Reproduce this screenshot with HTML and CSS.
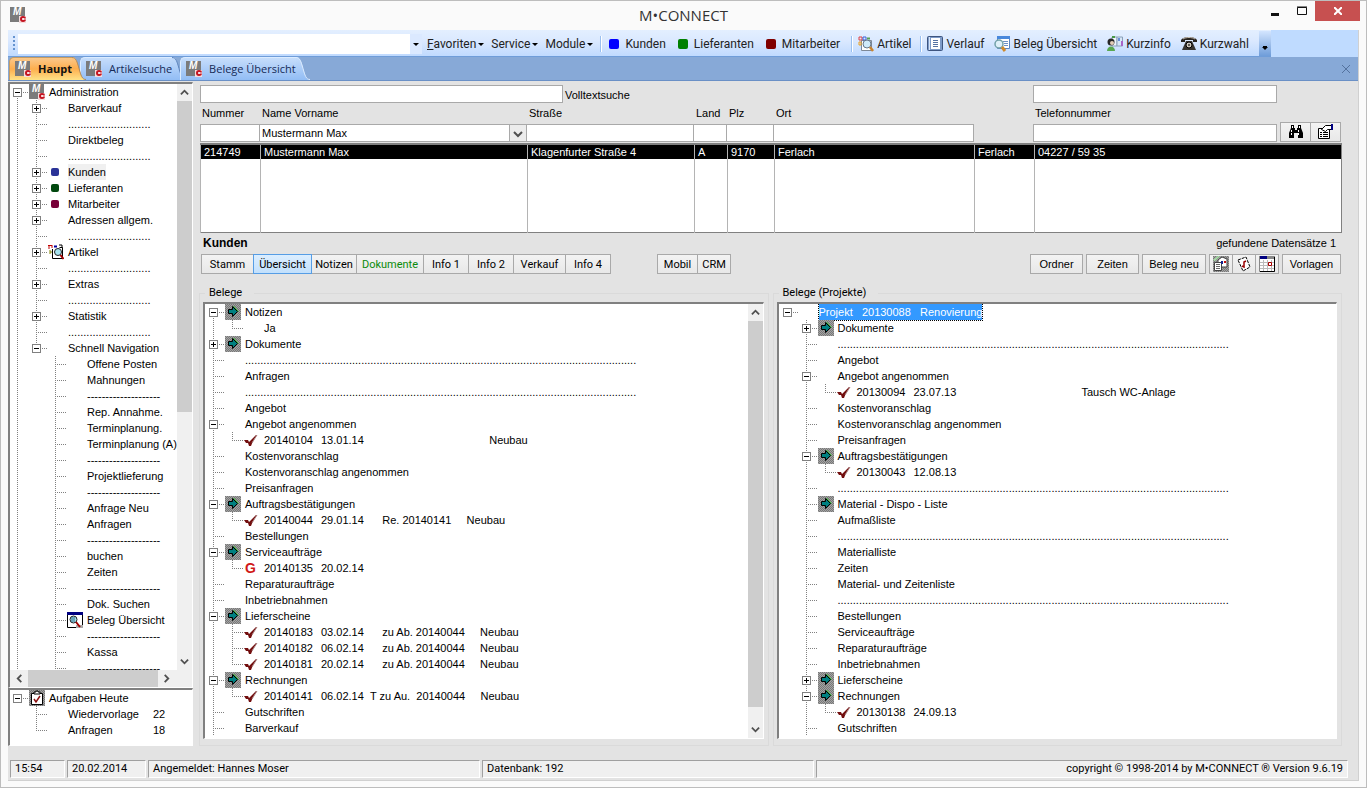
FILE: index.html
```html
<!DOCTYPE html>
<html lang="de">
<head>
    <meta charset="utf-8">
    <title>M•CONNECT</title>
    <link rel="stylesheet" href="styles.css">
</head>
<body>

    <!-- Shared icons -->
    <svg class="defs" width="0" height="0">
        <defs>
            <pattern id="checker" width="2" height="2" patternUnits="userSpaceOnUse">
                <rect width="2" height="2" fill="#a4a4a4"/>
                <rect width="1" height="1" fill="#787878"/>
                <rect x="1" y="1" width="1" height="1" fill="#787878"/>
            </pattern>
            <linearGradient id="tab-blue" x1="0" y1="0" x2="0" y2="1">
                <stop offset="0" stop-color="#c6ddfb"/>
                <stop offset="1" stop-color="#92bdf5"/>
            </linearGradient>
            <linearGradient id="tab-orange" x1="0" y1="0" x2="0" y2="1">
                <stop offset="0" stop-color="#fbc98c"/>
                <stop offset="0.5" stop-color="#fdae4e"/>
                <stop offset="1" stop-color="#fee287"/>
            </linearGradient>
        </defs>
        <symbol id="logo" viewBox="0 0 16 16">
            <rect width="15" height="15" fill="#7b7b7b"/>
            <text x="3" y="8" font-family="Liberation Sans" font-size="10" font-weight="bold" font-style="italic" fill="#fff">M</text>
            <path d="M9 9h7v7H9z" fill="#f4dcdc"/>
            <circle cx="13" cy="12" r="2" fill="#fff" stroke="#c41420" stroke-width="2"/>
            <path d="M13 12h3" stroke="#fff"/>
        </symbol>
        <symbol id="arrow" viewBox="0 0 16 16">
            <rect width="16" height="16" fill="url(#checker)"/>
            <path d="M3.500 5.500h4v-3l5 5-5 5v-3h-4z" fill="#008080" stroke="#000"/>
            <path d="M8.500 2l5 5.500" stroke="#2fbf2f" fill="none"/>
        </symbol>
        <symbol id="check" viewBox="0 0 16 16">
            <path d="M0 8h4l1 2 7-7h1L9 9l-2 5H5l-1-3H2z" fill="#720e0e"/>
            <path d="M8 11l5-8" stroke="#a98080" fill="none"/>
        </symbol>
        <symbol id="glass" viewBox="0 0 16 16">
            <path d="M1 1v4M0 1.500h4M4 1v3" fill="none" stroke="#c00000"/>
            <path d="M4.500 5v9.500h10V3.500h-3" fill="#fff" stroke="#000"/>
            <path d="M2 6v4M2 8h2" stroke="#808000"/>
            <path d="M6 2.500h3" stroke="#0000a0" stroke-width="2"/>
            <path d="M11 1h3v3" stroke="#000" fill="none"/>
            <circle cx="10" cy="8" r="3.500" fill="#a8e4f0" stroke="#222"/>
            <path d="M12.500 11l3 4" stroke="#a00000" stroke-width="2"/>
        </symbol>
        <symbol id="glass-soft" viewBox="0 0 16 16">
            <path d="M3.500 4.500h10v10h-10z" fill="#fff" stroke="#7d8896"/>
            <path d="M1 1h3v3H1z" fill="none" stroke="#e04040"/>
            <path d="M5 1h3v3H5z" fill="none" stroke="#3a62d8"/>
            <path d="M1 6h2v3H1z" fill="none" stroke="#e8a020"/>
            <path d="M9 2.500h3" stroke="#58a058" stroke-width="2"/>
            <circle cx="9" cy="8" r="4" fill="#cfeafa" stroke="#68788c"/>
            <path d="M12 11l3 4" stroke="#c88430" stroke-width="2.500"/>
        </symbol>
        <symbol id="beleg" viewBox="0 0 16 16">
            <path d="M.5.5h15v15H.5z" fill="#fff" stroke="#000"/>
            <path d="M0 0h16v3H0z" fill="#000080"/>
            <path d="M9 13h7v3H9z" fill="#aaa"/>
            <circle cx="6.500" cy="7.500" r="3.500" fill="#a8e0e8" stroke="#222"/>
            <path d="M9 10l4 5" stroke="#a00000" stroke-width="2"/>
            <path d="M5 5v5M7 5v5" stroke="#2b6a8a"/>
        </symbol>
        <symbol id="beleg-soft" viewBox="0 0 16 16">
            <path d="M3.500.5h12v12h-12z" fill="#fff" stroke="#5b85c0"/>
            <path d="M3 0h13v3H3z" fill="#4888dc"/>
            <path d="M9 5.500h5M10 7.500h4M10 9.500h4" stroke="#6d90c4"/>
            <circle cx="5" cy="8" r="4" fill="#dff0f8" stroke="#72a0a8" stroke-width="1.500"/>
            <path d="M8 11l3 4" stroke="#cf8a2c" stroke-width="3"/>
        </symbol>
        <symbol id="verlauf" viewBox="0 0 16 16">
            <rect x=".5" y=".5" width="15" height="14" rx="1" fill="#7d9ac8" stroke="#3d5580"/>
            <path d="M4 2h9v11H4z" fill="#fff"/>
            <path d="M6 4.500h5M6 6.500h5M6 8.500h5M6 10.500h5" stroke="#5673a4"/>
            <path d="M2.500 1v13" stroke="#d7e5f8"/>
        </symbol>
        <symbol id="kurzinfo" viewBox="0 0 16 16">
            <path d="M5 1h5v9H5z" fill="#eef4fb" stroke="#8aa0b8"/>
            <path d="M10 1h5.500v9H10z" fill="#d6e6f8" stroke="#8aa0b8"/>
            <path d="M5 0h3v2H5z" fill="#4a9a48"/>
            <path d="M11 2h2v3h-2z" fill="#6a90d8"/>
            <path d="M14 5h2v5h-2z" fill="#a864c8"/>
            <circle cx="4" cy="6" r="3.500" fill="#282828"/>
            <circle cx="5" cy="7" r="2" fill="#e3cdb8"/>
            <path d="M0 15c0-6 8-6 8 0z" fill="#58a850"/>
        </symbol>
        <symbol id="phone" viewBox="0 0 16 16">
            <path d="M0 6V4c2-4 14-4 16 0v2h-4V4H4v2z" fill="#282420"/>
            <path d="M5 5h6l4 9H1z" fill="#383430"/>
            <circle cx="8" cy="9" r="3" fill="#cfc6ba" stroke="#000"/>
            <circle cx="8" cy="9" r="1" fill="#333"/>
            <path d="M2 3c3-2 9-2 12 0" stroke="#c8beb0" fill="none"/>
        </symbol>
        <symbol id="clipboard" viewBox="0 0 16 16">
            <rect width="16" height="16" fill="url(#checker)"/>
            <path d="M2.500 3.500h11v11h-11z" fill="#fff" stroke="#000"/>
            <path d="M5 4V2h2V1h2v1h2v2z" fill="#fff" stroke="#000"/>
            <path d="M5 9l2 3 4-6" stroke="#8a1010" stroke-width="1.500" fill="none"/>
        </symbol>
        <symbol id="binoculars" viewBox="0 0 16 16">
            <path d="M3 1h3v3h1v2h2V4h1V1h3v3l2 5v5h-5V9H6v5H1V9l2-5z" fill="#000"/>
            <path d="M4.500 2v2M3.500 6v5M11.500 2v2M10.500 6v5" stroke="#fff" stroke-dasharray="2 1"/>
        </symbol>
        <symbol id="properties" viewBox="0 0 16 16">
            <path d="M.5 4.500h11v10H.5z" fill="#fff" stroke="#000"/>
            <path d="M2 8.500h2M5 8.500h5M2 10.500h2M5 10.500h5M2 12.500h2M5 12.500h5" stroke="#000"/>
            <path d="M3.500 5.500l4-4h6v4h-4l-2 2z" fill="#fff" stroke="#000"/>
            <path d="M13 0h2v6h-2z" fill="#000080"/>
        </symbol>
        <symbol id="mail" viewBox="0 0 16 16">
            <rect width="16" height="16" fill="url(#checker)"/>
            <path d="M5 4l4-3 5 2v8H5z" fill="#fff" stroke="#444"/>
            <path d="M0 4l5-4h2L2 5z" fill="#a4e0a4"/>
            <path d="M1.500 6.500h7v8h-7z" fill="#fff" stroke="#444"/>
            <path d="M3 8.500h4M3 10.500h4M3 12.500h4" stroke="#666"/>
            <path d="M8 5h2v3H8z" fill="#102090"/>
            <path d="M11 5h2v2h-2z" fill="#c01010"/>
        </symbol>
        <symbol id="note" viewBox="0 0 16 16">
            <path d="M2 4l8-3 4 10-7 4z" fill="#fff" stroke="#000" stroke-dasharray="3 1"/>
            <path d="M6 10l2 1V6l2-1" fill="none" stroke="#900" stroke-width="1.500"/>
        </symbol>
        <symbol id="calendar" viewBox="0 0 16 16">
            <path d="M.5.5h15v15H.5z" fill="#fff" stroke="#888"/>
            <path d="M1 6.500h14M1 9.500h14M1 12.500h14M4.500 4v12M8.500 4v12M12.500 4v12" stroke="#bbb"/>
            <path d="M0 0h16v3H0z" fill="#888"/>
            <path d="M1 0h7v3H1z" fill="#000080"/>
            <path d="M9.500 6.500h3v3h-3z" fill="#fff" stroke="#a00"/>
            <path d="M15.500 1v14.500H1" stroke="#000" fill="none"/>
        </symbol>
        <symbol id="chevron" viewBox="0 0 10 10">
            <path d="M1 3l4 4 4-4" fill="none" stroke="#505050" stroke-width="2"/>
        </symbol>
    </svg>

    <div class="window">

        <header class="titlebar">
            <svg class="icon"><use href="#logo"/></svg>
            <h1>M•CONNECT</h1>
            <div class="window-buttons">
                <button class="win-min" aria-label="Minimieren"><svg width="8" height="10"><path d="M0 8.500h8" stroke="#111" stroke-width="3"/></svg></button>
                <button class="win-max" aria-label="Maximieren"><svg width="10" height="10"><path d="M.5 1.500h9v7h-9zM0 1h10" fill="none" stroke="#111"/></svg></button>
                <button class="win-close" aria-label="Schließen"><svg width="8" height="8"><path d="M0 0l8 8M8 0L0 8" stroke="#fff" stroke-width="2"/></svg></button>
            </div>
        </header>

        <div class="frame">

            <nav class="toolbar">
                <div class="tools">
                    <span class="grip"></span>
                    <div class="combo">
                        <input type="text" aria-label="Befehl">
                        <button class="caret" aria-label="Auswahl"></button>
                    </div>
                    <button class="menu"><u>F</u>avoriten<i></i></button>
                    <button class="menu">Service<i></i></button>
                    <button class="menu">Module<i></i></button>
                    <span class="sep"></span>
                    <button class="tool"><span class="dot blue"></span>Kunden</button>
                    <button class="tool"><span class="dot green"></span>Lieferanten</button>
                    <button class="tool"><span class="dot maroon"></span>Mitarbeiter</button>
                    <span class="sep"></span>
                    <button class="tool pic"><svg class="icon"><use href="#glass-soft"/></svg>Artikel</button>
                    <span class="sep"></span>
                    <button class="tool pic"><svg class="icon"><use href="#verlauf"/></svg>Verlauf</button>
                    <button class="tool pic"><svg class="icon"><use href="#beleg-soft"/></svg>Beleg Übersicht</button>
                    <button class="tool pic"><svg class="icon"><use href="#kurzinfo"/></svg>Kurzinfo</button>
                    <button class="tool pic"><svg class="icon"><use href="#phone"/></svg>Kurzwahl</button>
                    <button class="more" aria-label="Mehr"><i></i></button>
                </div>
            </nav>

            <nav class="tabs">
                <button class="tab active"><span><svg class="icon"><use href="#logo"/></svg>Haupt</span><svg class="slant" viewBox="0 0 14 23"><path d="M0 0c4 0 5 4 7 11s3 12 7 12H0z" fill="url(#tab-orange)"/><path d="M0 .5c4 0 5 4 7 11s3 11 7 11" fill="none" stroke="#b08a5a"/></svg></button>
                <button class="tab"><span><svg class="icon"><use href="#logo"/></svg>Artikelsuche</span><svg class="slant" viewBox="0 0 14 23"><path d="M0 0c4 0 5 4 7 11s3 12 7 12H0z" fill="url(#tab-blue)"/><path d="M0 .5c4 0 5 4 7 11s3 11 7 11" fill="none" stroke="#5d84bd"/></svg></button>
                <button class="tab"><span><svg class="icon"><use href="#logo"/></svg>Belege Übersicht</span><svg class="slant" viewBox="0 0 14 23"><path d="M0 0c4 0 5 4 7 11s3 12 7 12H0z" fill="url(#tab-blue)"/><path d="M0 .5c4 0 5 4 7 11s3 11 7 11" fill="none" stroke="#dcecff"/></svg></button>
                <button class="tab-close" aria-label="Tab schließen"><svg width="8" height="8"><path d="M0 0l8 8M8 0L0 8" stroke="#54729e"/></svg></button>
            </nav>

            <div class="content">

                <aside>
                    <div class="panel navigation">
                        <div class="scroll-area">
                            <ul class="tree">
                                <li><button class="box"></button><svg class="icon"><use href="#logo"/></svg><span>Administration</span>
                                    <ul>
                                        <li><button class="box plus"></button><span>Barverkauf</span></li>
                                        <li><span>...........................</span></li>
                                        <li><span>Direktbeleg</span></li>
                                        <li><span>...........................</span></li>
                                        <li><button class="box plus"></button><b class="dot navy"></b><span class="hover">Kunden</span></li>
                                        <li><button class="box plus"></button><b class="dot dark-green"></b><span>Lieferanten</span></li>
                                        <li><button class="box plus"></button><b class="dot plum"></b><span>Mitarbeiter</span></li>
                                        <li><button class="box plus"></button><span>Adressen allgem.</span></li>
                                        <li><span>...........................</span></li>
                                        <li><button class="box plus"></button><svg class="icon"><use href="#glass"/></svg><span>Artikel</span></li>
                                        <li><span>...........................</span></li>
                                        <li><button class="box plus"></button><span>Extras</span></li>
                                        <li><span>...........................</span></li>
                                        <li><button class="box plus"></button><span>Statistik</span></li>
                                        <li><span>...........................</span></li>
                                        <li><button class="box"></button><span>Schnell Navigation</span>
                                            <ul>
                                                <li><span>Offene Posten</span></li>
                                                <li><span>Mahnungen</span></li>
                                                <li><span>--------------------</span></li>
                                                <li><span>Rep. Annahme.</span></li>
                                                <li><span>Terminplanung.</span></li>
                                                <li><span>Terminplanung (A)</span></li>
                                                <li><span>--------------------</span></li>
                                                <li><span>Projektlieferung</span></li>
                                                <li><span>--------------------</span></li>
                                                <li><span>Anfrage Neu</span></li>
                                                <li><span>Anfragen</span></li>
                                                <li><span>--------------------</span></li>
                                                <li><span>buchen</span></li>
                                                <li><span>Zeiten</span></li>
                                                <li><span>--------------------</span></li>
                                                <li><span>Dok. Suchen</span></li>
                                                <li><svg class="icon"><use href="#beleg"/></svg><span>Beleg Übersicht</span></li>
                                                <li><span>--------------------</span></li>
                                                <li><span>Kassa</span></li>
                                                <li><span>--------------------</span></li>
                                                <li></li>
                                            </ul>
                                        </li>
                                    </ul>
                                </li>
                                <li></li>
                            </ul>
                        </div>
                        <div class="scrollbar">
                            <svg class="up"><use href="#chevron"/></svg>
                            <div class="thumb"></div>
                            <svg><use href="#chevron"/></svg>
                        </div>
                        <div class="scrollbar horizontal">
                            <svg class="left"><use href="#chevron"/></svg>
                            <div class="thumb"></div>
                            <svg class="right"><use href="#chevron"/></svg>
                        </div>
                    </div>

                    <div class="panel tasks">
                        <ul class="tree">
                            <li><button class="box"></button><svg class="icon"><use href="#clipboard"/></svg><span>Aufgaben Heute</span>
                                <ul>
                                    <li><span><em class="task">Wiedervorlage</em>22</span></li>
                                    <li><span><em class="task">Anfragen</em>18</span></li>
                                </ul>
                            </li>
                        </ul>
                    </div>
                </aside>

                <main>
                    <form class="search">
                        <input class="fulltext" id="fulltext" type="text">
                        <label class="fulltext-label" for="fulltext">Volltextsuche</label>
                        <input class="phone-top" type="text" aria-label="Suche">

                        <label class="first-label" for="nummer">Nummer</label>
                        <label for="name">Name Vorname</label>
                        <label for="strasse">Straße</label>
                        <label for="land">Land</label>
                        <label for="plz">Plz</label>
                        <label for="ort">Ort</label>
                        <label class="phone-label" for="telefon">Telefonnummer</label>

                        <input class="first" id="nummer" type="text">
                        <div class="name-box">
                            <input id="name" type="text" value="Mustermann Max">
                            <button type="button" aria-label="Auswahl"><svg width="10" height="10"><use href="#chevron"/></svg></button>
                        </div>
                        <input id="strasse" type="text">
                        <input id="land" type="text">
                        <input id="plz" type="text">
                        <input id="ort" type="text">
                        <input class="phone first" id="telefon" type="text">
                        <div class="search-buttons">
                            <button type="button" class="btn" aria-label="Suchen"><svg class="icon"><use href="#binoculars"/></svg></button>
                            <button type="button" class="btn" aria-label="Eigenschaften"><svg class="icon"><use href="#properties"/></svg></button>
                        </div>
                    </form>

                    <table class="results">
                        <colgroup>
                            <col class="c-nr"><col class="c-name"><col class="c-street"><col class="c-land"><col class="c-plz"><col class="c-ort"><col class="c-ort2"><col>
                        </colgroup>
                        <tr class="selected">
                            <td>214749</td>
                            <td>Mustermann Max</td>
                            <td>Klagenfurter Straße 4</td>
                            <td>A</td>
                            <td>9170</td>
                            <td>Ferlach</td>
                            <td>Ferlach</td>
                            <td>04227 / 59 35</td>
                        </tr>
                        <tr><td></td><td></td><td></td><td></td><td></td><td></td><td></td><td></td></tr>
                    </table>

                    <div class="heading">
                        <h2>Kunden</h2>
                        <span>gefundene Datensätze 1</span>
                    </div>

                    <div class="actions">
                        <div class="group">
                            <button class="btn w52">Stamm</button>
                            <button class="btn w58 current">Übersicht</button>
                            <button class="btn w46">Notizen</button>
                            <button class="btn w66 green-text">Dokumente</button>
                            <button class="btn w46">Info 1</button>
                            <button class="btn w46">Info 2</button>
                            <button class="btn w52">Verkauf</button>
                            <button class="btn w46">Info 4</button>
                        </div>
                        <div class="group">
                            <button class="btn w40">Mobil</button>
                            <button class="btn w34">CRM</button>
                        </div>
                        <div class="group right">
                            <button class="btn w52">Ordner</button>
                            <button class="btn w52">Zeiten</button>
                            <button class="btn w64">Beleg neu</button>
                            <div class="group">
                                <button class="btn" aria-label="Mail"><svg class="icon"><use href="#mail"/></svg></button>
                                <button class="btn" aria-label="Notiz"><svg class="icon"><use href="#note"/></svg></button>
                                <button class="btn" aria-label="Kalender"><svg class="icon"><use href="#calendar"/></svg></button>
                            </div>
                            <button class="btn w58">Vorlagen</button>
                        </div>
                    </div>

                    <div class="columns">
                        <fieldset>
                            <legend>Belege</legend>
                            <div class="panel">
                                <div class="scroll-area">
                                    <ul class="tree">
                                        <li><button class="box"></button><svg class="icon"><use href="#arrow"/></svg><span>Notizen</span>
                                            <ul>
                                                <li><span>Ja</span></li>
                                            </ul>
                                        </li>
                                        <li><button class="box plus"></button><svg class="icon"><use href="#arrow"/></svg><span>Dokumente</span></li>
                                        <li><span>................................................................................................................................</span></li>
                                        <li><span>Anfragen</span></li>
                                        <li><span>................................................................................................................................</span></li>
                                        <li><span>Angebot</span></li>
                                        <li><button class="box"></button><span>Angebot angenommen</span>
                                            <ul>
                                                <li><svg class="icon"><use href="#check"/></svg><span><em class="no">20140104</em><em class="date">13.01.14</em>                                       Neubau</span></li>
                                            </ul>
                                        </li>
                                        <li><span>Kostenvoranschlag</span></li>
                                        <li><span>Kostenvoranschlag angenommen</span></li>
                                        <li><span>Preisanfragen</span></li>
                                        <li><button class="box"></button><svg class="icon"><use href="#arrow"/></svg><span>Auftragsbestätigungen</span>
                                            <ul>
                                                <li><svg class="icon"><use href="#check"/></svg><span><em class="no">20140044</em><em class="date">29.01.14</em>    Re. 20140141     Neubau</span></li>
                                            </ul>
                                        </li>
                                        <li><span>Bestellungen</span></li>
                                        <li><button class="box"></button><svg class="icon"><use href="#arrow"/></svg><span>Serviceaufträge</span>
                                            <ul>
                                                <li><b class="letter">G</b><span><em class="no">20140135</em><em class="date">20.02.14</em></span></li>
                                            </ul>
                                        </li>
                                        <li><span>Reparaturaufträge</span></li>
                                        <li><span>Inbetriebnahmen</span></li>
                                        <li><button class="box"></button><svg class="icon"><use href="#arrow"/></svg><span>Lieferscheine</span>
                                            <ul>
                                                <li><svg class="icon"><use href="#check"/></svg><span><em class="no">20140183</em><em class="date">03.02.14</em>    zu Ab. 20140044     Neubau</span></li>
                                                <li><svg class="icon"><use href="#check"/></svg><span><em class="no">20140182</em><em class="date">06.02.14</em>    zu Ab. 20140044     Neubau</span></li>
                                                <li><svg class="icon"><use href="#check"/></svg><span><em class="no">20140181</em><em class="date">20.02.14</em>    zu Ab. 20140044     Neubau</span></li>
                                            </ul>
                                        </li>
                                        <li><button class="box"></button><svg class="icon"><use href="#arrow"/></svg><span>Rechnungen</span>
                                            <ul>
                                                <li><svg class="icon"><use href="#check"/></svg><span><em class="no">20140141</em><em class="date">06.02.14</em>T zu Au.  20140044     Neubau</span></li>
                                            </ul>
                                        </li>
                                        <li><span>Gutschriften</span></li>
                                        <li><span>Barverkauf</span></li>
                                        <li></li>
                                    </ul>
                                </div>
                                <div class="scrollbar">
                                    <svg class="up"><use href="#chevron"/></svg>
                                    <div class="thumb"></div>
                                    <svg><use href="#chevron"/></svg>
                                </div>
                            </div>
                        </fieldset>

                        <fieldset>
                            <legend>Belege (Projekte)</legend>
                            <div class="panel">
                                <div class="scroll-area">
                                    <ul class="tree">
                                        <li><button class="box"></button><span class="marked">Projekt   20130088   Renovierung</span>
                                            <ul>
                                                <li><button class="box plus"></button><svg class="icon"><use href="#arrow"/></svg><span>Dokumente</span></li>
                                                <li><span>................................................................................................................................</span></li>
                                                <li><span>Angebot</span></li>
                                                <li><button class="box"></button><span>Angebot angenommen</span>
                                                    <ul>
                                                        <li><svg class="icon"><use href="#check"/></svg><span><em class="no">20130094</em><em class="date">23.07.13</em>                                       Tausch WC-Anlage</span></li>
                                                    </ul>
                                                </li>
                                                <li><span>Kostenvoranschlag</span></li>
                                                <li><span>Kostenvoranschlag angenommen</span></li>
                                                <li><span>Preisanfragen</span></li>
                                                <li><button class="box"></button><svg class="icon"><use href="#arrow"/></svg><span>Auftragsbestätigungen</span>
                                                    <ul>
                                                        <li><svg class="icon"><use href="#check"/></svg><span><em class="no">20130043</em><em class="date">12.08.13</em></span></li>
                                                    </ul>
                                                </li>
                                                <li><span>................................................................................................................................</span></li>
                                                <li><svg class="icon"><use href="#arrow"/></svg><span>Material - Dispo - Liste</span></li>
                                                <li><span>Aufmaßliste</span></li>
                                                <li><span>................................................................................................................................</span></li>
                                                <li><span>Materialliste</span></li>
                                                <li><span>Zeiten</span></li>
                                                <li><span>Material- und Zeitenliste</span></li>
                                                <li><span>................................................................................................................................</span></li>
                                                <li><span>Bestellungen</span></li>
                                                <li><span>Serviceaufträge</span></li>
                                                <li><span>Reparaturaufträge</span></li>
                                                <li><span>Inbetriebnahmen</span></li>
                                                <li><button class="box plus"></button><svg class="icon"><use href="#arrow"/></svg><span>Lieferscheine</span></li>
                                                <li><button class="box"></button><svg class="icon"><use href="#arrow"/></svg><span>Rechnungen</span>
                                                    <ul>
                                                        <li><svg class="icon"><use href="#check"/></svg><span><em class="no">20130138</em><em class="date">24.09.13</em></span></li>
                                                    </ul>
                                                </li>
                                                <li><span>Gutschriften</span></li>
                                                <li></li>
                                            </ul>
                                        </li>
                                    </ul>
                                </div>
                            </div>
                        </fieldset>
                    </div>
                </main>
            </div>

            <footer>
                <span>15:54</span>
                <span>20.02.2014</span>
                <span>Angemeldet: Hannes Moser</span>
                <span>Datenbank: 192</span>
                <span class="copyright">copyright © 1998-2014 by M•CONNECT ® Version 9.6.19</span>
            </footer>
        </div>
    </div>

</body>
</html>
```

FILE: styles.css
```css
* {
    box-sizing: border-box;
}

body {
    margin: 0;
    font-family: "Liberation Sans", Arial, sans-serif;
    font-size: 11px;
    color: #000;
}

button, input {
    font: inherit;
    color: inherit;
    padding: 0;
    margin: 0;
    border: 0;
    border-radius: 0;
    background: none;
}

.defs {
    position: absolute;
}

.icon {
    width: 16px;
    height: 16px;
    flex: none;
}

.window {
    display: flex;
    flex-direction: column;
    height: 100vh;
    border: 1px solid #bdbdbd;
    background-color: #fafafa;
}

/* Title bar */
.titlebar {
    display: flex;
    align-items: flex-start;
    height: 29px;
    flex: none;
}

.titlebar .icon {
    margin: 6px 0 0 9px;
}

.titlebar h1 {
    flex: 1;
    margin: 0;
    padding-left: 80px;
    text-align: center;
    font: 15px/28px "Open Sans", sans-serif;
    color: #333;
}

.window-buttons {
    display: flex;
    margin-right: 6px;
}

.window-buttons button {
    width: 27px;
    height: 20px;
    display: flex;
    align-items: center;
    justify-content: center;
}

.window-buttons .win-close {
    width: 45px;
    background-color: #c75050;
}

.frame {
    flex: 1;
    min-height: 0;
    display: flex;
    flex-direction: column;
    margin: 0 7px 6px;
    background-color: #e3e3e3;
    border-right: 1px solid #d0d0d0;
    border-bottom: 1px solid #d0d0d0;
}

/* Toolbar */
.toolbar {
    height: 27px;
    flex: none;
    background-color: #bfdbff;
}

.tools {
    display: flex;
    align-items: center;
    width: max-content;
    height: 27px;
    padding-top: 1px;
    border-bottom: 1px solid #6f9dd9;
    background: linear-gradient(#e3efff, #dbe9ff 40%, #c0dafe);
    font: 12px/18px Roboto, sans-serif;
    color: #222;
}

.grip {
    width: 2px;
    height: 16px;
    margin: 0 3px 0 5px;
    background: repeating-linear-gradient(#6593cf 0 2px, transparent 2px 4px);
}

.combo {
    display: flex;
    width: 404px;
    height: 20px;
    margin-right: 5px;
    background-color: #fff;
}

.combo input {
    flex: 1;
}

.caret {
    width: 12px;
    background-color: #dbe9ff;
}

.caret::before, .menu i, .more i {
    content: "";
    display: inline-block;
    border: 3px solid transparent;
    border-top-color: #000;
    border-bottom: 0;
    vertical-align: middle;
}

.menu i {
    margin-left: 2px;
}

.menu {
    margin-right: 7px;
}

.sep {
    width: 2px;
    height: 16px;
    margin-right: 7px;
    border-left: 1px solid #9ac0f0;
    border-right: 1px solid #fff;
}

.tool {
    display: flex;
    align-items: center;
    gap: 6px;
    margin-right: 12px;
}

.tool.pic {
    gap: 3px;
    margin-right: 10px;
}

.tool + .sep {
    margin: 0 5px 0 -1px;
}

.dot {
    width: 10px;
    height: 10px;
    border-radius: 2px;
}

.blue { background-color: #0000ff; }
.green { background-color: #008000; }
.maroon { background-color: #800000; }
.navy { background-color: #2a3397; }
.dark-green { background-color: #00480e; }
.plum { background-color: #780038; }

.more {
    align-self: stretch;
    width: 12px;
    padding-top: 8px;
    background: linear-gradient(#d3e5ff, #6f9dd9);
}

.more i {
    padding-bottom: 0;
    box-shadow: 0 -2px 0 -1px #000;
}

/* Document tabs */
.tabs {
    display: flex;
    flex: none;
    height: 24px;
    padding-left: 1px;
    background-color: #87a9d7;
    border-bottom: 1px solid #6a90c6;
    font: 500 11px/22px "Open Sans", sans-serif;
}

.tab {
    display: flex;
    margin-right: -6px;
    color: #152a56;
}

.tab span {
    display: flex;
    align-items: center;
    gap: 7px;
    height: 23px;
    padding-left: 5px;
    background: linear-gradient(#c6ddfb, #92bdf5);
    border-top: 1px solid #dcecff;
    border-left: 1px solid #dcecff;
    border-top-left-radius: 5px;
}

.tab.active {
    position: relative;
    z-index: 1;
}

.tab.active span {
    background: linear-gradient(#fbc98c, #fdae4e 50%, #fee287);
    border-color: #c59b62;
    color: #111;
    font-weight: bold;
}

.slant {
    width: 14px;
    height: 23px;
}

.tab-close {
    margin-left: auto;
    margin-right: 8px;
}

/* Content */
.content {
    flex: 1;
    min-height: 0;
    display: grid;
    grid-template-columns: 185px minmax(0, 1fr);
    gap: 7px;
}

aside {
    display: flex;
    flex-direction: column;
    min-height: 0;
    padding: 1px 0 14px;
}

.panel {
    display: grid;
    grid-template-columns: minmax(0, 1fr) auto;
    grid-template-rows: minmax(0, 1fr) auto;
    min-height: 0;
    background-color: #fff;
    border: 1px solid #fff;
    border-top: 2px solid #808080;
    border-left: 2px solid #808080;
}

.navigation {
    flex: 1;
}

.tasks {
    height: 58px;
    flex: none;
}

.scroll-area {
    overflow: hidden;
}

.scrollbar {
    width: 15px;
    display: flex;
    flex-direction: column;
    background-color: #f0f0f0;
}

.scrollbar svg {
    width: 9px;
    height: 9px;
    flex: none;
    margin: 4px 3px;
}

.scrollbar .up { transform: rotate(180deg); }
.scrollbar .left { transform: rotate(90deg); }
.scrollbar .right { transform: rotate(-90deg); }

.thumb {
    flex: 1;
    margin-bottom: 14px;
    background-color: #cdcdcd;
}

.navigation .thumb {
    margin-bottom: 241px;
}

.scrollbar.horizontal {
    grid-column: 1 / -1;
    width: auto;
    height: 17px;
    flex-direction: row;
    padding: 0 17px 0 1px;
}

.horizontal svg {
    margin: 4px;
}

.navigation .horizontal .thumb {
    margin: 0;
}

/* Tree view */
.tree, .tree ul {
    list-style: none;
    margin: 0;
    padding: 0;
}

.tree li {
    display: grid;
    grid-template-columns: 19px 20px 1fr;
    grid-auto-rows: minmax(16px, auto);
    line-height: 16px;
    background-image:
        repeating-linear-gradient(#808080 0 1px, transparent 1px 2px),
        repeating-linear-gradient(to right, #808080 0 1px, transparent 1px 2px);
    background-repeat: no-repeat;
    background-size: 1px 100%, 12px 1px;
    background-position: 7px 0, 7px 8px;
}

.tree > li:first-child {
    background-position: 7px 8px, 7px 8px;
}

.tree li:last-child {
    background-size: 1px 8px, 12px 1px;
}

.tree > li:first-child:last-child {
    background-size: 0 0, 12px 1px;
}

.tree ul {
    grid-column: 1 / -1;
    padding-left: 19px;
}

.tree .icon, .tree .dot, .tree .letter {
    grid-column: 2;
}

.tree .dot {
    width: 8px;
    height: 8px;
    margin: 4px 3px;
}

.letter {
    font: bold 14px/16px "Liberation Sans", Arial, sans-serif;
    color: #d01818;
    padding-left: 1px;
}

.tree li > span {
    grid-column: 3;
    justify-self: start;
    white-space: pre;
}

.tree em {
    display: inline-block;
    font-style: normal;
}

.no { width: 57px; }
.date { width: 49px; }
.task { width: 85px; }

.box {
    width: 9px;
    height: 9px;
    margin: 4px 0 0 3px;
    border: 1px solid #808080;
    background: linear-gradient(#000, #000) center / 5px 1px no-repeat #fff;
}

.box.plus {
    background:
        linear-gradient(#000, #000) center / 5px 1px no-repeat,
        linear-gradient(#000, #000) center / 1px 5px no-repeat #fff;
}

.hover {
    background-color: #f0f0f0;
}

.marked {
    background-color: #3399ff;
    color: #fff;
    outline: 1px dotted #000;
}

/* Search */
main {
    display: flex;
    flex-direction: column;
    min-height: 0;
    padding: 4px 16px 14px 0;
}

.search {
    display: grid;
    grid-template-columns: 60px 267px 167px 33px 47px 200px 59px 1fr 65px;
    grid-template-rows: 18px 18px 21px;
    align-items: end;
}

.search input {
    width: 100%;
    height: 18px;
    padding-left: 2px;
    background-color: #fff;
    border: 1px solid #a9a9a9;
    border-left: 0;
}

.search .fulltext {
    grid-column: 1 / 4;
    grid-row: 1;
    width: 363px;
    border: 1px solid #a9a9a9;
}

.search .fulltext-label {
    grid-column: 3 / 6;
    grid-row: 1;
    padding-left: 38px;
}

.search .phone-top {
    grid-column: 8;
    grid-row: 1;
    border: 1px solid #a9a9a9;
}

.search label {
    line-height: 16px;
    padding-left: 2px;
    white-space: nowrap;
}

.search .first-label {
    grid-column: 1;
}

.search .phone-label {
    grid-column: 8 / -1;
}

.search input.first {
    border-left: 1px solid #a9a9a9;
}

.search .phone {
    grid-column: 8;
}

.name-box {
    display: flex;
}

.name-box button {
    width: 18px;
    height: 18px;
    margin-left: -18px;
    padding-top: 4px;
    border: 1px solid #a9a9a9;
    background-color: #ececec;
}

.search-buttons {
    display: flex;
    padding-left: 3px;
}

.search-buttons .btn {
    width: 31px;
}

.results {
    height: 90px;
    width: 100%;
    margin-top: 1px;
    table-layout: fixed;
    border-collapse: collapse;
    background-color: #fff;
    border: 1px solid #808080;
    border-top-width: 2px;
}

.c-nr { width: 60px; }
.c-name { width: 267px; }
.c-street { width: 167px; }
.c-land { width: 33px; }
.c-plz { width: 47px; }
.c-ort { width: 200px; }
.c-ort2 { width: 60px; }

.results td {
    padding: 0 3px;
    border-left: 1px solid #b4b4b4;
    white-space: nowrap;
}

.selected td {
    height: 14px;
    line-height: 14px;
    background-color: #000;
    color: #fff;
}

.heading {
    display: flex;
    justify-content: space-between;
    align-items: center;
    height: 20px;
    padding: 0 6px 0 3px;
}

.heading h2 {
    margin: 0;
    font-size: 12px;
}

/* Buttons */
.actions {
    display: flex;
    gap: 46px;
    height: 20px;
    padding: 0 1px;
    margin-top: 1px;
    font-family: Roboto, sans-serif;
}

.group {
    display: flex;
}

.right {
    margin-left: auto;
    gap: 3px;
    font-family: "Liberation Sans", Arial, sans-serif;
}

.btn {
    display: flex;
    align-items: center;
    justify-content: center;
    min-width: 24px;
    height: 20px;
    border: 1px solid #a9a9a9;
    background: linear-gradient(#f3f3f3, #e8e8e8);
}

.btn + .btn {
    margin-left: -1px;
}

.right > .btn + .btn {
    margin-left: 0;
}

.w34 { width: 34px; }
.w40 { width: 41px; }
.w46 { width: 46px; }
.w52 { width: 53px; }
.w58 { width: 59px; }
.w64 { width: 64px; }
.w66 { width: 68px; }

.current {
    position: relative;
    border-color: #569de5;
    background: linear-gradient(#dceeff, #c2e0fc);
}

.green-text {
    color: #0a8a0a;
}

/* Document lists */
.columns {
    flex: 1;
    min-height: 0;
    display: grid;
    grid-template-columns: 1fr 1fr;
    gap: 4px;
    margin-top: 12px;
    margin-left: -1px;
}

fieldset {
    display: flex;
    flex-direction: column;
    min-width: 0;
    min-height: 0;
    margin: 0;
    padding: 2px 4px 6px 3px;
    border: 1px solid #dadada;
}

fieldset .tree {
    padding-left: 1px;
}

legend {
    margin-left: 2px;
    padding: 0 12px 0 4px;
    font: 11px/14px Roboto, sans-serif;
}

fieldset .panel {
    flex: 1;
}

/* Status bar */
footer {
    display: grid;
    grid-template-columns: 55px 79px 332px 332px 1fr;
    gap: 2px;
    flex: none;
    padding: 0 10px 2px 2px;
    font: 11px/16px Roboto, sans-serif;
}

footer span {
    height: 18px;
    padding: 0 4px;
    background-color: #f0f0f0;
    border: 1px solid #fff;
    border-top-color: #a0a0a0;
    border-left-color: #a0a0a0;
}

.copyright {
    text-align: right;
}
```
